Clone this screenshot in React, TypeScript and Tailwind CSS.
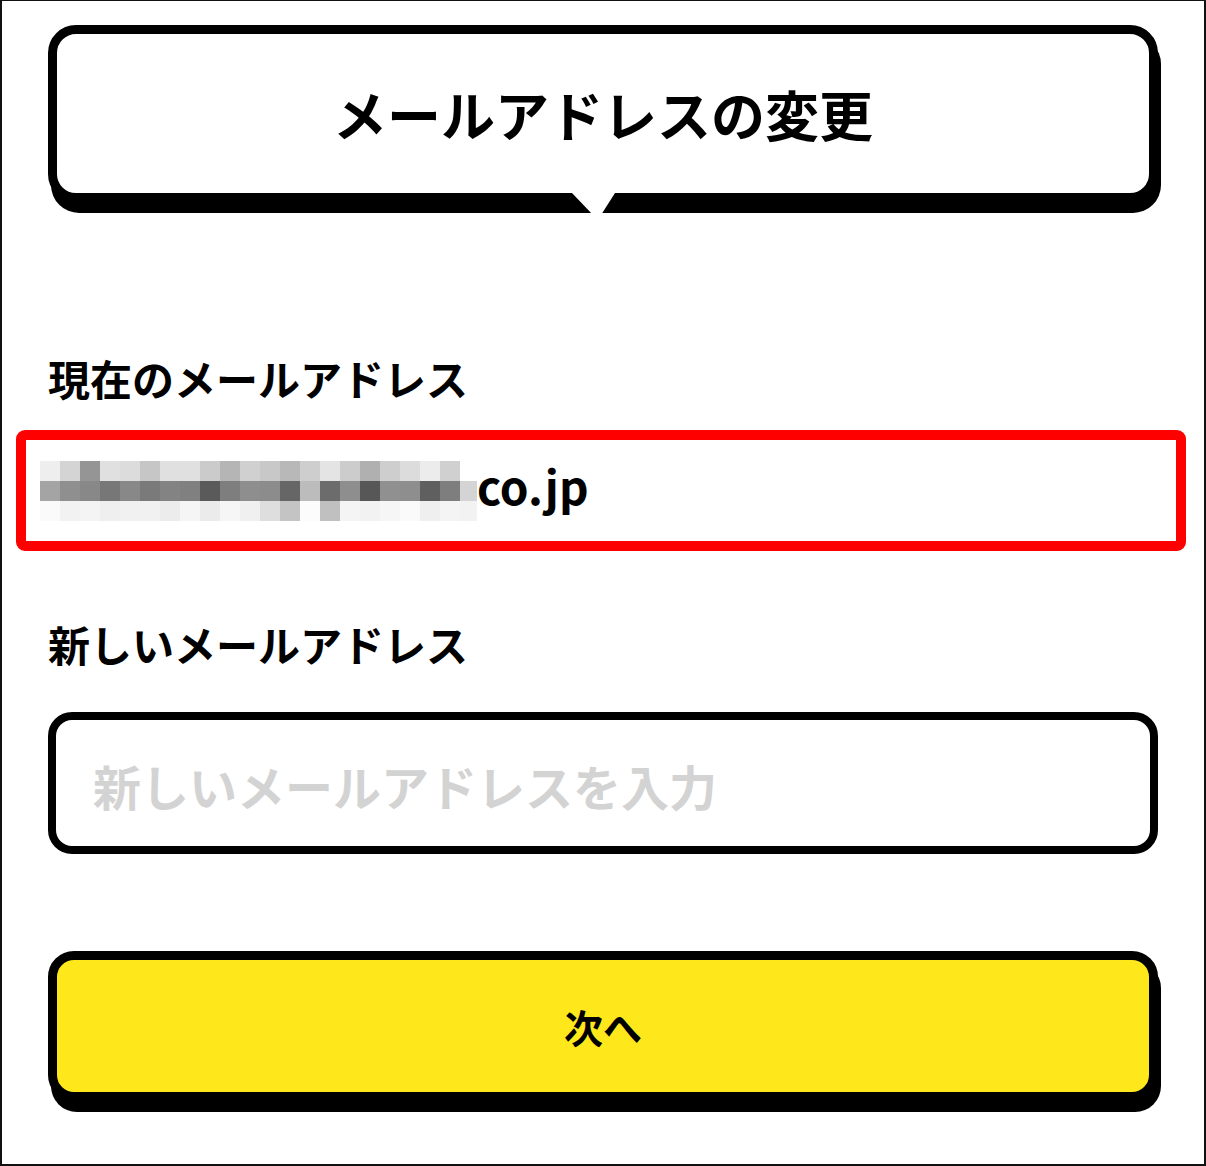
const mosaic: string[][] = [
  [
    "bg-[#eeeeee]", "bg-[#d4d4d4]", "bg-[#959595]", "bg-[#e0e0e0]", "bg-[#dcdcdc]", "bg-[#c6c6c6]",
    "bg-[#e0e0e0]", "bg-[#e0e0e0]", "bg-[#cbcbcb]", "bg-[#b5b5b5]", "bg-[#d0d0d0]", "bg-[#c8c8c8]",
    "bg-[#b8b8b8]", "bg-[#cecece]", "bg-[#e4e4e4]", "bg-[#cccccc]", "bg-[#b0b0b0]", "bg-[#cecece]",
    "bg-[#dcdcdc]", "bg-[#ececec]", "bg-[#d0d0d0]", "bg-white",
  ],
  [
    "bg-[#a4a4a4]", "bg-[#8f8f8f]", "bg-[#888888]", "bg-[#777777]", "bg-[#888888]", "bg-[#7a7a7a]",
    "bg-[#838383]", "bg-[#808080]", "bg-[#5a5a5a]", "bg-[#7e7e7e]", "bg-[#8e8e8e]", "bg-[#8c8c8c]",
    "bg-[#666666]", "bg-[#bcbcbc]", "bg-[#6c6c6c]", "bg-[#8e8e8e]", "bg-[#575757]", "bg-[#909090]",
    "bg-[#8e8e8e]", "bg-[#5f5f5f]", "bg-[#7e7e7e]", "bg-[#d4d4d4]",
  ],
  [
    "bg-[#fafafa]", "bg-[#f2f2f2]", "bg-[#f4f4f4]", "bg-[#efefef]", "bg-[#f1f1f1]", "bg-[#f1f1f1]",
    "bg-[#ececec]", "bg-[#f5f5f5]", "bg-[#ebebeb]", "bg-[#f6f6f6]", "bg-[#f0f0f0]", "bg-[#dedede]",
    "bg-[#c4c4c4]", "bg-[#fcfcfc]", "bg-[#c0c0c0]", "bg-[#f4f4f4]", "bg-[#f2f2f2]", "bg-[#f6f6f6]",
    "bg-[#fafafa]", "bg-[#efefef]", "bg-[#f4f4f4]", "bg-[#f2f2f2]",
  ],
]

function Mosaic() {
  return (
    <div className="flex flex-col">
      {mosaic.map((row, r) => (
        <div key={r} className="flex">
          {row.map((cls, c) => (
            <div key={c} className={`${cls} h-[20px] ${c === row.length - 1 ? "w-[17px]" : "w-[20px]"}`} />
          ))}
        </div>
      ))}
    </div>
  )
}

export default function App() {
  return (
    <div
      className="w-[1206px] h-[1166px] border-2 border-t border-[#111] bg-white px-[46px] text-black overflow-hidden"
      style={{ fontFamily: '"Noto Sans CJK JP", "Noto Sans", sans-serif' }}
    >
      {/* heading bubble */}
      <div className="relative mt-[24px] h-[177px] rounded-[28px] border-[9px] border-black bg-white shadow-[3px_11px_0_0_#000] flex items-center justify-center">
        <h1 className="text-[54px] font-bold leading-none">メールアドレスの変更</h1>
        <div className="absolute left-[515px] top-[159px] w-[43px] h-[27px] bg-white [clip-path:polygon(0_0,100%_0,60%_100%)]" />
      </div>

      <p className="mt-[155px] text-[42px] font-bold leading-none">現在のメールアドレス</p>

      <div className="mt-[31px] -ml-[32px] -mr-[28px] h-[121px] rounded-[9px] border-[10px] border-[#ff0000] flex items-center pl-[14px]">
        <Mosaic />
        <span className="text-[46px] font-bold leading-none mb-[12px]">co.jp</span>
      </div>

      <p className="mt-[72px] text-[42px] font-bold leading-none">新しいメールアドレス</p>

      <div className="mt-[47px] h-[142px] rounded-[24px] border-8 border-black flex items-center pl-[37px] pt-1">
        <input
          type="email"
          placeholder="新しいメールアドレスを入力"
          className="w-full bg-transparent outline-none text-[48px] font-bold leading-none placeholder:text-[#d3d3d3]"
        />
      </div>

      <button className="mt-[97px] w-full h-[150px] rounded-[26px] border-[9px] border-black bg-[#fee71b] shadow-[3px_11px_0_0_#000] flex items-center justify-center">
        <span className="text-[39px] font-bold leading-none">次へ</span>
      </button>
    </div>
  )
}
